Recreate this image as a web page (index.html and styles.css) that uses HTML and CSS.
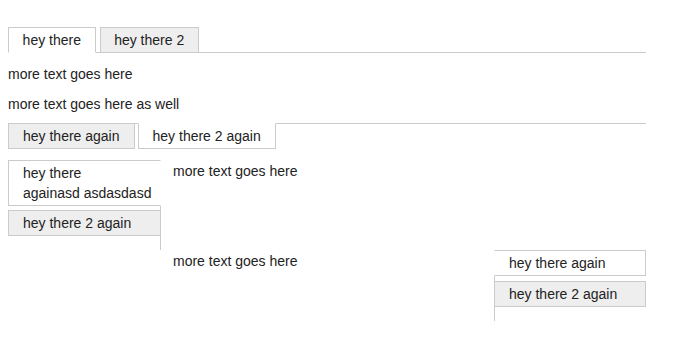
FILE: index.html
```html
<!DOCTYPE html>
<html>
<head>
<meta charset="utf-8">
<link rel="stylesheet" href="styles.css">
</head>
<body>
<div class="page">
  <section class="tabbable tabbable-top">
    <ul class="nav nav-h nav-top">
      <li class="tab active">hey there</li>
      <li class="tab">hey there 2</li>
    </ul>
    <div class="pane pane-top">
      <p>more text goes here</p>
      <p>more text goes here as well</p>
    </div>
  </section>

  <section class="tabbable tabbable-below">
    <ul class="nav nav-h nav-below">
      <li class="tab">hey there again</li>
      <li class="tab active">hey there 2 again</li>
    </ul>
  </section>

  <section class="tabbable tabbable-left">
    <ul class="nav nav-v nav-left">
      <li class="tab active">hey there againasd&nbsp;asdasdasd</li>
      <li class="tab">hey there 2 again</li>
    </ul>
    <div class="pane pane-side">
      <p>more text goes here</p>
    </div>
  </section>

  <section class="tabbable tabbable-right">
    <div class="pane pane-side pane-right">
      <p>more text goes here</p>
    </div>
    <ul class="nav nav-v nav-right">
      <li class="tab active">hey there again</li>
      <li class="tab">hey there 2 again</li>
    </ul>
  </section>
</div>
</body>
</html>
```

FILE: styles.css
```css
* { box-sizing: border-box; }

body {
  margin: 8px;
  font-family: "Liberation Sans", Arial, sans-serif;
  font-size: 14px;
  line-height: 16px;
  color: #222;
  background: #fff;
}

.page {
  width: 638px;
  padding-top: 19px;
}

p { margin: 0; }

.nav {
  list-style: none;
  margin: 0;
  padding: 0;
  display: flex;
}

.tab {
  padding: 2px 13.6px;
  line-height: 20px;
  border: 1px solid #cbcbcb;
  background: #eee;
  white-space: nowrap;
}

.tab.active { background: #fff; }

/* horizontal tabs */
.nav-top { gap: 4px; border-bottom: 1px solid #cbcbcb; }
.nav-top .tab { margin-bottom: -1px; }
.nav-top .tab.active { border-bottom-color: #fff; }

.pane-top {
  padding: 13px 0 11px;
  display: flex;
  flex-direction: column;
  gap: 14px;
}

.nav-below { gap: 3px; border-top: 1px solid #cbcbcb; }
.nav-below .tab { margin-top: -1px; padding: 2px 14px; }
.nav-below .tab.active { border-top-color: #fff; }

/* vertical tabs */
.tabbable-left,
.tabbable-right {
  display: flex;
  align-items: stretch;
}

.tabbable-left { margin-top: 11px; height: 90px; }
.tabbable-right { height: 71px; }

.nav-v {
  flex-direction: column;
  width: 153px;
  flex: none;
}

.nav-left { gap: 4px; border-right: 1px solid #cbcbcb; }
.nav-left .tab { margin-right: -1px; padding-left: 14px; white-space: normal; }
.nav-left .tab.active { border-right-color: #fff; }

.nav-right { width: 152px; gap: 5px; border-left: 1px solid #cbcbcb; }
.nav-right .tab { margin-left: -1px; padding-left: 14px; }
.nav-right .tab.active { border-left-color: #fff; }

.pane-side {
  flex: 1;
  padding: 3px 0 0 12px;
}

.pane-right { padding-left: 165px; }
```
